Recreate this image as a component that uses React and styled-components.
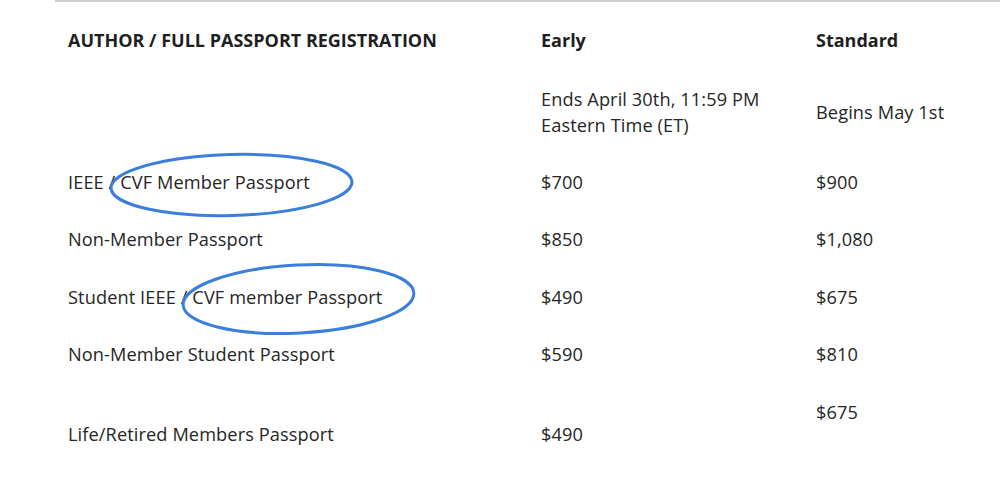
import React from "react";
import styled, { createGlobalStyle } from "styled-components";

const Global = createGlobalStyle`
  html, body { margin: 0; padding: 0; background: #fff; }
  body { font-family: "Open Sans", "Liberation Sans", sans-serif; color: #222; }
`;

const Page = styled.div`
  position: relative;
  width: 1000px;
  height: 497px;
  overflow: hidden;
  background: #fff;
`;

const Table = styled.table`
  margin-left: 55px;
  width: 945px;
  border-collapse: collapse;
  border-top: 2px solid #cfcfcf;
  table-layout: fixed;
`;

const Col = styled.col`
  width: ${(p) => p.$w}px;
`;

const Row = styled.tr`
  height: ${(p) => p.$h}px;
`;

const Cell = styled.td`
  padding: ${(p) => (p.$top != null ? `${p.$top}px 13px 0` : "0 13px")};
  vertical-align: ${(p) => (p.$top != null ? "top" : "middle")};
  font-size: 18.2px;
  line-height: 26px;
  font-weight: 400;
  color: #262626;
  letter-spacing: 0.1px;
`;

const HeadCell = styled.th`
  padding: 25px 13px 0;
  vertical-align: top;
  text-align: left;
  font-size: 18px;
  line-height: 26px;
  font-weight: 700;
  color: #1f1f1f;
`;

const Overlay = styled.svg`
  position: absolute;
  left: 0;
  top: 0;
  pointer-events: none;
`;

const rows = [
  { label: "IEEE / CVF Member Passport", early: "$700", std: "$900", h: 57 },
  { label: "Non-Member Passport", early: "$850", std: "$1,080", h: 58 },
  { label: "Student IEEE / CVF member Passport", early: "$490", std: "$675", h: 57 },
  { label: "Non-Member Student Passport", early: "$590", std: "$810", h: 58 },
];

export default function App() {
  return (
    <Page>
      <Global />
      <Table>
        <colgroup>
          <Col $w={473} />
          <Col $w={275} />
          <Col $w={197} />
        </colgroup>
        <thead>
          <Row $h={70}>
            <HeadCell>AUTHOR / FULL PASSPORT REGISTRATION</HeadCell>
            <HeadCell>Early</HeadCell>
            <HeadCell>Standard</HeadCell>
          </Row>
        </thead>
        <tbody>
          <Row $h={82}>
            <Cell />
            <Cell>
              Ends April 30th, 11:59 PM
              <br />
              Eastern Time (ET)
            </Cell>
            <Cell>Begins May 1st</Cell>
          </Row>
          {rows.map((r) => (
            <Row key={r.label} $h={r.h}>
              <Cell>{r.label}</Cell>
              <Cell>{r.early}</Cell>
              <Cell>{r.std}</Cell>
            </Row>
          ))}
          <Row $h={102}>
            <Cell>Life/Retired Members Passport</Cell>
            <Cell>$490</Cell>
            <Cell $top={16}>$675</Cell>
          </Row>
        </tbody>
      </Table>
      <Overlay width="1000" height="497" viewBox="0 0 1000 497">
        <ellipse
          cx="231.5"
          cy="185"
          rx="120.5"
          ry="30.5"
          fill="none"
          stroke="#3b7fdc"
          strokeWidth="3"
          transform="rotate(-1.5 231.5 185)"
        />
        <ellipse
          cx="298.5"
          cy="299"
          rx="115.5"
          ry="34"
          fill="none"
          stroke="#3b7fdc"
          strokeWidth="3"
          transform="rotate(-3 298.5 299)"
        />
      </Overlay>
    </Page>
  );
}
